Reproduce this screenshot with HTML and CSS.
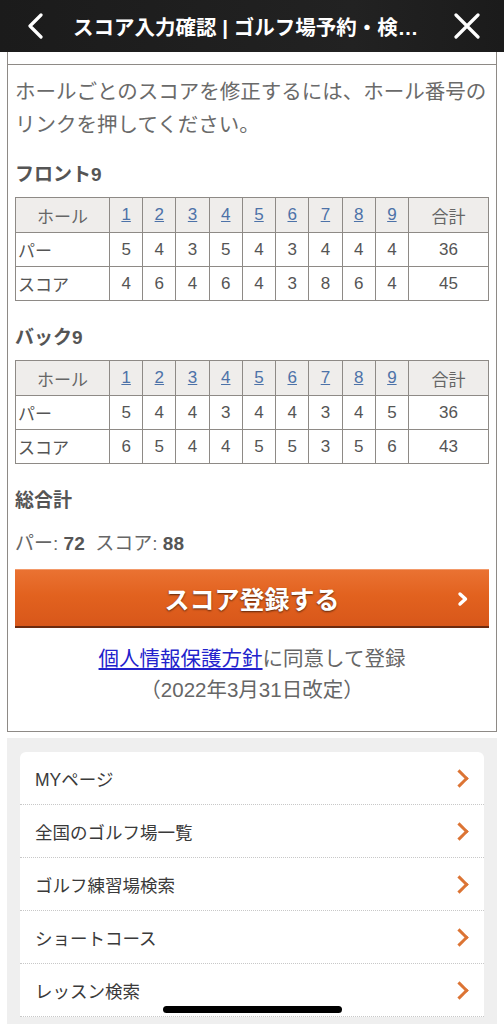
FILE: index.html
```html
<!doctype html>
<html lang="ja">
<head>
<meta charset="utf-8" />
<title>スコア入力確認 | ゴルフ場予約・検索</title>
<link rel="stylesheet" href="styles.css">
</head>
<body>

<header class="navbar">
	<svg class="nav-icon" width="24" height="26" viewBox="0 0 24 26">
		<path d="M17 2 L6 13 L17 24" fill="none" stroke="#fff" stroke-width="3.2" stroke-linecap="round" stroke-linejoin="round" />
	</svg>
	<div class="nav-title">スコア入力確認 | ゴルフ場予約・検…</div>
	<svg class="nav-icon" width="26" height="26" viewBox="0 0 26 26">
		<path d="M2 2 L24 24 M24 2 L2 24" fill="none" stroke="#fff" stroke-width="3.2" stroke-linecap="round" />
	</svg>
</header>

<main class="panel">
	<div class="panel-cap"></div>
	<div class="panel-body">
		<p class="note">ホールごとのスコアを修正するには、ホール番号のリンクを押してください。</p>

		<h3>フロント9</h3>
		<table class="score">
			<tr class="head">
				<th class="label-col">ホール</th>
				<th><a href="#">1</a></th><th><a href="#">2</a></th><th><a href="#">3</a></th>
				<th><a href="#">4</a></th><th><a href="#">5</a></th><th><a href="#">6</a></th>
				<th><a href="#">7</a></th><th><a href="#">8</a></th><th><a href="#">9</a></th>
				<th class="total-col">合計</th>
			</tr>
			<tr>
				<td class="label">パー</td>
				<td>5</td><td>4</td><td>3</td><td>5</td><td>4</td><td>3</td><td>4</td><td>4</td><td>4</td>
				<td>36</td>
			</tr>
			<tr>
				<td class="label">スコア</td>
				<td>4</td><td>6</td><td>4</td><td>6</td><td>4</td><td>3</td><td>8</td><td>6</td><td>4</td>
				<td>45</td>
			</tr>
		</table>

		<h3>バック9</h3>
		<table class="score">
			<tr class="head">
				<th class="label-col">ホール</th>
				<th><a href="#">1</a></th><th><a href="#">2</a></th><th><a href="#">3</a></th>
				<th><a href="#">4</a></th><th><a href="#">5</a></th><th><a href="#">6</a></th>
				<th><a href="#">7</a></th><th><a href="#">8</a></th><th><a href="#">9</a></th>
				<th class="total-col">合計</th>
			</tr>
			<tr>
				<td class="label">パー</td>
				<td>5</td><td>4</td><td>4</td><td>3</td><td>4</td><td>4</td><td>3</td><td>4</td><td>5</td>
				<td>36</td>
			</tr>
			<tr>
				<td class="label">スコア</td>
				<td>6</td><td>5</td><td>4</td><td>4</td><td>5</td><td>5</td><td>3</td><td>5</td><td>6</td>
				<td>43</td>
			</tr>
		</table>

		<h3 class="grand">総合計</h3>
		<p class="totals">パー: <b>72</b>&nbsp; スコア: <b>88</b></p>

		<a class="submit" href="#">
			<span>スコア登録する</span>
			<svg class="submit-arrow" width="12" height="16" viewBox="0 0 12 16">
				<path d="M3 3 L8.5 8 L3 13" fill="none" stroke="#fff" stroke-width="3.4" stroke-linecap="round" stroke-linejoin="round" />
			</svg>
		</a>

		<p class="policy"><a href="#">個人情報保護方針</a>に同意して登録<br>（2022年3月31日改定）</p>
	</div>
</main>

<nav class="menu-wrap">
	<ul class="menu">
		<li><a href="#">MYページ</a></li>
		<li><a href="#">全国のゴルフ場一覧</a></li>
		<li><a href="#">ゴルフ練習場検索</a></li>
		<li><a href="#">ショートコース</a></li>
		<li><a href="#">レッスン検索</a></li>
	</ul>
</nav>

<div class="home-indicator"></div>

</body>
</html>
```

FILE: styles.css
```css
:root {
	font-family: "Liberation Sans", "Noto Sans CJK JP", sans-serif;
	color: #666;
	background-color: #fff;
}

body {
	margin: 0;
	width: 504px;
	overflow: hidden;
}

/* top bar */
.navbar {
	height: 52px;
	background: linear-gradient(90deg, #1b1b1b, #222 70%, #1b1b1b);
	display: flex;
	align-items: center;
	padding: 0 24px 0 24px;
	box-sizing: border-box;
}
.nav-icon {
	flex: none;
}
.nav-title {
	flex: 1;
	margin: 0 20px 0 25px;
	color: #fff;
	font-weight: bold;
	font-size: 20.5px;
	white-space: nowrap;
}

/* score panel */
.panel {
	margin: 0 7px;
	border: 1px solid #8e8a86;
	border-top: none;
}
.panel-cap {
	height: 12px;
	border-bottom: 1px solid #8e8a86;
}
.panel-body {
	padding: 10px 7px 26px;
}

.note {
	margin: 0;
	font-size: 20.5px;
	line-height: 33px;
	color: #6a6a6a;
}

h3 {
	margin: 21px 0 9px;
	font-size: 19px;
	line-height: 26px;
	color: #555;
}
h3 + .score {
	margin-bottom: 24px;
}
h3.grand {
	margin: 0;
}

.score {
	width: 100%;
	border-collapse: collapse;
	table-layout: fixed;
	font-size: 17px;
	color: #555;
}
.score th,
.score td {
	border: 1px solid #8e8a86;
	height: 33px;
	padding: 0;
	text-align: center;
	font-weight: normal;
}
.score .head th {
	height: 34px;
	background-color: #efedeb;
	color: #666;
}
.score .label-col {
	width: 93px;
}
.score .total-col {
	width: 79px;
}
.score td.label {
	text-align: left;
	padding-left: 2px;
}
.score a {
	color: #4d72a8;
}

.totals {
	margin: 15px 0 10px;
	font-size: 19px;
	line-height: 30px;
	color: #666;
}
.totals b {
	color: #555;
}

.submit {
	position: relative;
	display: flex;
	align-items: center;
	justify-content: center;
	height: 56px;
	background: linear-gradient(#ea7232, #e2621f 45%, #d8571a);
	border-top: 1px solid #f39a6a;
	border-bottom: 2px solid #6c2a0f;
	color: #fff;
	font-weight: bold;
	font-size: 25px;
	text-decoration: none;
	text-shadow: 0 1px 2px rgba(0, 0, 0, 0.6);
}
.submit-arrow {
	position: absolute;
	right: 20px;
	top: 21px;
}

.policy {
	margin: 15px 0 0;
	text-align: center;
	font-size: 20.5px;
	line-height: 31px;
	color: #666;
}
.policy a {
	color: #2222cc;
}

/* footer menu */
.menu-wrap {
	margin: 6px 7px 0;
	padding: 14px 13px 40px;
	background-color: #efefef;
}
.menu {
	list-style: none;
	margin: 0;
	padding: 0;
	background-color: #fff;
	border-radius: 6px 6px 0 0;
}
.menu li {
	border-bottom: 1px dotted #c8c8c8;
}
.menu a {
	display: flex;
	align-items: center;
	justify-content: space-between;
	height: 52px;
	padding: 0 14px 0 15px;
	color: #3a3a3a;
	font-size: 17.5px;
	text-decoration: none;
}
.menu a::after {
	content: "";
	width: 10px;
	height: 10px;
	margin-right: 4px;
	border-top: 3px solid #dc7434;
	border-right: 3px solid #dc7434;
	transform: rotate(45deg);
}

.home-indicator {
	position: fixed;
	left: 163px;
	top: 1006px;
	width: 179px;
	height: 7px;
	border-radius: 4px;
	background-color: #000;
}
```
